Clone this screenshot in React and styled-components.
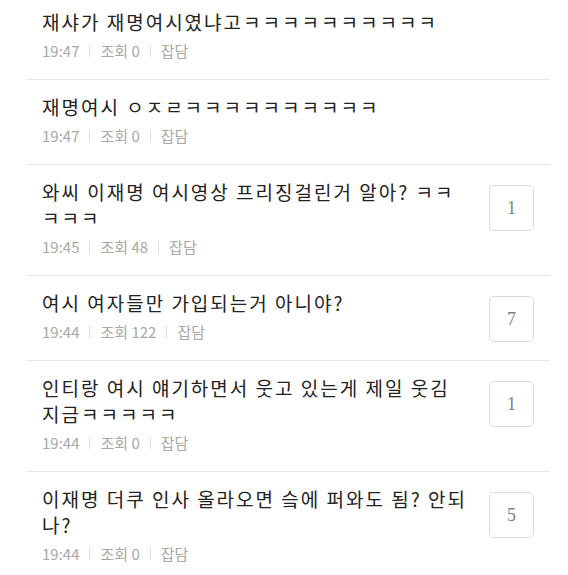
import React from "react";
import styled, { createGlobalStyle } from "styled-components";

const GlobalStyle = createGlobalStyle`
  html, body {
    margin: 0;
    padding: 0;
    background: #fff;
  }

  body {
    font-family: "Noto Sans CJK KR", "Noto Sans", sans-serif;
  }
`;

const List = styled.ul`
  list-style: none;
  margin: -5px 18px 0 27px;
  padding: 0;
`;

const Item = styled.li`
  display: flex;
  align-items: flex-start;
  gap: 22px;
  padding: 14px 16px 18px 15px;
  border-bottom: 1px solid #e6e6e6;
`;

const Body = styled.div`
  flex: 1;
  min-width: 0;
`;

const Title = styled.div`
  font-size: 19px;
  line-height: 26px;
  letter-spacing: 2px;
  color: #222;
`;

const Meta = styled.div`
  display: flex;
  align-items: center;
  margin-top: 6px;
  font-size: 15px;
  line-height: 20px;
  color: #a8a8a8;
`;

const Sep = styled.span`
  display: inline-block;
  width: 1px;
  height: 12px;
  margin: 0 10px;
  background: #dedede;
`;

const Count = styled.div`
  flex: none;
  width: 43px;
  height: 44px;
  margin-top: 6px;
  display: flex;
  align-items: center;
  justify-content: center;
  border: 1px solid #dcdcdc;
  border-radius: 5px;
  font-family: "Liberation Serif", serif;
  font-size: 18px;
  color: #808080;
`;

const posts = [
  { title: "재샤가 재명여시였냐고ㅋㅋㅋㅋㅋㅋㅋㅋㅋㅋ", time: "19:47", views: 0 },
  { title: "재명여시 ㅇㅈㄹㅋㅋㅋㅋㅋㅋㅋㅋㅋㅋ", time: "19:47", views: 0 },
  { title: "와씨 이재명 여시영상 프리징걸린거 알아? ㅋㅋㅋㅋㅋ", time: "19:45", views: 48, comments: 1 },
  { title: "여시 여자들만 가입되는거 아니야?", time: "19:44", views: 122, comments: 7 },
  { title: "인티랑 여시 얘기하면서 웃고 있는게 제일 웃김 지금ㅋㅋㅋㅋㅋ", time: "19:44", views: 0, comments: 1 },
  { title: "이재명 더쿠 인사 올라오면 슼에 퍼와도 됨? 안되나?", time: "19:44", views: 0, comments: 5 },
];

export default function App() {
  return (
    <>
      <GlobalStyle />
      <List>
        {posts.map((p, i) => (
          <Item key={i}>
            <Body>
              <Title>{p.title}</Title>
              <Meta>
                <span>{p.time}</span>
                <Sep />
                <span>조회 {p.views}</span>
                <Sep />
                <span>잡담</span>
              </Meta>
            </Body>
            {p.comments != null && <Count>{p.comments}</Count>}
          </Item>
        ))}
      </List>
    </>
  );
}
